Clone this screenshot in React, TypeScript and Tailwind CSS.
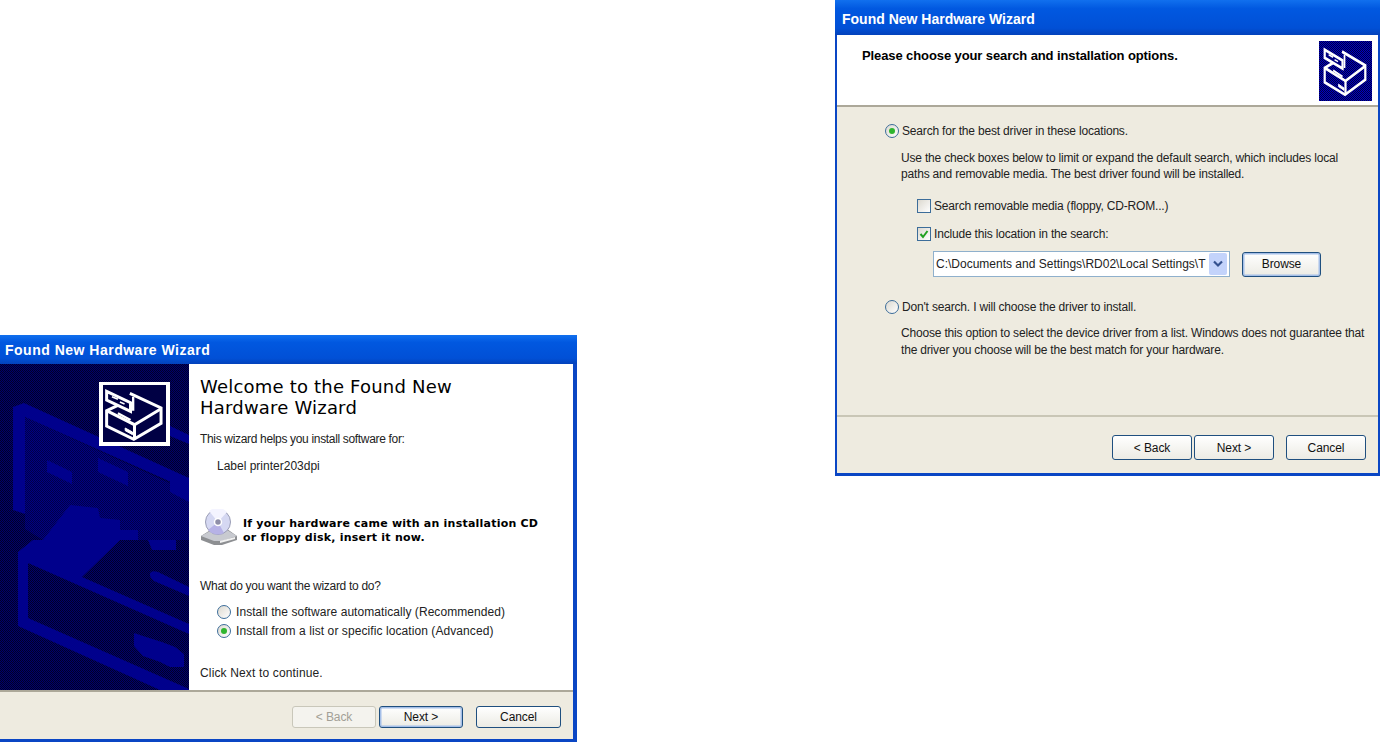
function HardwareIcon({ cardFill }: { cardFill: string }) {
  return (
    <g fill="none" stroke="#fff" strokeWidth="9" strokeLinejoin="miter">
      <path d="M120 52 L214 96 L214 142 L132 190 L50 150 L50 104 L84 88" />
      <path d="M50 104 L134 146 L214 98" />
      <path d="M134 146 L134 190" />
      <path d="M130 62 L130 104 M84 112 L122 132" strokeWidth="7" />
      <path d="M106 156 L128 168 L128 176 L106 164 Z" fill="#fff" strokeWidth="3" />
      <path d="M50 46 L122 80 L122 106 L50 72 Z" fill={cardFill} />
      <path d="M66 62 L84 70 M90 78 L104 84" strokeWidth="5" />
    </g>
  );
}

function DitherDefs({ id, light, dark }: { id: string; light: string; dark: string }) {
  return (
    <defs>
      <pattern id={id} width="2" height="2" patternUnits="userSpaceOnUse">
        <rect width="2" height="2" fill={light} />
        <rect width="1" height="1" fill={dark} />
        <rect x="1" y="1" width="1" height="1" fill={dark} />
      </pattern>
    </defs>
  );
}

function SidePanel() {
  const blue = "#00008c";
  return (
    <svg className="block w-[189px] h-[326px] shrink-0" viewBox="0 0 189 326">
      <DitherDefs id="panel" light="#00006c" dark="#000028" />
      <DitherDefs id="panelMid" light="#000084" dark="#000048" />
      <rect width="189" height="326" fill="url(#panel)" />
      <path d="M25 53 L189 128 L189 176 L43 176 L25 165 Z" fill="url(#panelMid)" />
      <g fill={blue}>
        <path d="M13 43 L24 39 L189 114 L189 126 L25 53 L25 150 L13 146 Z" />
        <path d="M170 62 L189 71 L189 80 L170 72 Z" />
        <path d="M170 106 L189 115 L189 138 L170 128 Z" />
        <path d="M47 96 L72 108 L72 120 L47 108 Z" />
        <path d="M98 94 L128 108 L128 122 L98 108 Z" />
        <path d="M18 188 L33 176 L43 176 L70 141 L88 143 L98 144 L100 154 L120 156 L120 166 L138 166 L138 176 L120 176 L82 213 L189 260 L189 270 L28 199 L28 254 L189 325 L189 326 L160 326 L18 262 Z" />
        <path d="M148 176 L176 176 L176 186 L152 186 Z" />
        <path d="M150 209 Q152 206 158 208 L189 223 L189 232 L154 217 Q149 213 150 209 Z" />
        <path d="M134 269 L143 272 L162 278 L175 283 L184 290 L184 303 L170 303 L160 298 L143 292 L134 282 Z" />
      </g>
      <rect x="99" y="18" width="71" height="64" fill="#fff" />
      <rect x="103" y="21" width="63" height="57" fill="#000044" />
      <svg x="99" y="18" width="71" height="64" viewBox="27 18 214 192" preserveAspectRatio="none">
        <HardwareIcon cardFill="#000044" />
      </svg>
    </svg>
  );
}

function CdIcon() {
  return (
    <svg className="w-[38px] h-[36px] shrink-0" viewBox="0 0 38 36">
      <path d="M1 27 L12 20 L27 20 L37 27 L37 31 L22 36 L14 36 L1 31 Z" fill="#8d8f92" />
      <path d="M1 27 L12 21 L27 21 L37 27 L22 32 L14 32 Z" fill="#c8cad0" />
      <path d="M20 32 L35 28 L35 30 L20 34 Z" fill="#f2f2f2" />
      <circle cx="18" cy="13" r="12.5" fill="#d5d8f2" stroke="#9a9db5" />
      <path d="M18 13 L9 2 A13 13 0 0 1 27 3 Z" fill="#f4f4ff" />
      <path d="M18 13 L8 21 A13 13 0 0 0 24 24 Z" fill="#b6b2e6" />
      <circle cx="18" cy="13" r="3.5" fill="#8f8fa8" stroke="#fff" strokeWidth="1.5" />
    </svg>
  );
}

function Radio({ on }: { on?: boolean }) {
  return (
    <span className="flex items-center justify-center w-[14px] h-[14px] shrink-0 rounded-full border border-[#3c6d9a] bg-linear-to-br from-[#dcd9d0] to-white">
      {on && <span className="block w-[6px] h-[6px] rounded-full bg-[#2fb52f]" />}
    </span>
  );
}

function Check({ on }: { on?: boolean }) {
  return (
    <span className="flex items-center justify-center w-[14px] h-[14px] shrink-0 border border-[#3c6d9a] bg-linear-to-br from-[#dcd9d0] to-white">
      {on && (
        <svg width="10" height="10" viewBox="0 0 10 10">
          <path d="M1.5 5 L4 8 L8.5 2" fill="none" stroke="#21a121" strokeWidth="2" />
        </svg>
      )}
    </span>
  );
}

function Btn({ label, w, strong, off }: { label: string; w: string; strong?: boolean; off?: boolean }) {
  return (
    <button
      className={`${w} h-full rounded-[3px] border text-[12px] tracking-[-0.1px] ${
        off
          ? "border-[#c9c7ba] bg-[#f4f3ee] text-[#a2a096]"
          : "border-[#1f4f7f] bg-linear-to-b from-white to-[#ecebe4] text-[#111]"
      } ${strong ? "shadow-[inset_0_0_0_1.5px_#a5bfe8]" : ""}`}
    >
      {label}
    </button>
  );
}

function TitleBar({ className, tracking }: { className: string; tracking: string }) {
  return (
    <div className={`${className} shrink-0 flex items-center bg-[linear-gradient(to_bottom,#1170ee_0%,#0158e0_25%,#0150d6_80%,#0342bb_100%)]`}>
      <span className={`${tracking} text-white font-bold text-[14px] font-['Liberation_Sans',sans-serif]`}>
        Found New Hardware Wizard
      </span>
    </div>
  );
}

export default function App() {
  return (
    <div className="w-[1380px] h-[742px] bg-white overflow-hidden flex justify-between items-start font-['Liberation_Sans',sans-serif] text-[12px] text-[#222]">
      {/* Welcome step */}
      <div className="w-[577px] h-[407px] mt-[335px] flex flex-col bg-[#0a46c4]">
        <TitleBar className="h-[29px] pl-[5px] pt-[2px]" tracking="tracking-[0.5px]" />
        <div className="flex flex-col flex-1 mr-[4px] mb-[3px]">
          <div className="h-[326px] flex bg-white">
            <SidePanel />
            <div className="pl-[11px] flex flex-col">
              <h1 className="mt-[12px] text-[18px] leading-[21px] tracking-[0.2px] text-black font-['DejaVu_Sans',sans-serif]">
                Welcome to the Found New
                <br />
                Hardware Wizard
              </h1>
              <p className="mt-[14px] leading-[14px] tracking-[-0.33px]">This wizard helps you install software for:</p>
              <p className="mt-[13px] ml-[17px] leading-[14px]">Label printer203dpi</p>
              <div className="mt-[36px] flex items-start gap-[5px]">
                <CdIcon />
                <p className="mt-[8px] font-['DejaVu_Sans',sans-serif] font-bold text-[11px] leading-[14px] tracking-[0.22px] text-black">
                  If your hardware came with an installation CD
                  <br />
                  or floppy disk, insert it now.
                </p>
              </div>
              <p className="mt-[34px] leading-[14px] tracking-[-0.3px]">What do you want the wizard to do?</p>
              <div className="mt-[12px] ml-[17px] flex items-center gap-[5px] h-[14px] tracking-[0.06px]">
                <Radio />
                <span>Install the software automatically (Recommended)</span>
              </div>
              <div className="mt-[5px] ml-[17px] flex items-center gap-[5px] h-[14px] tracking-[0.08px]">
                <Radio on />
                <span>Install from a list or specific location (Advanced)</span>
              </div>
              <p className="mt-[28px] leading-[14px] tracking-[0.15px]">Click Next to continue.</p>
            </div>
          </div>
          <div className="flex-1 border-t-2 border-[#aca899] bg-[#eeebe0] flex items-start pt-[14px] pr-[12px]">
            <div className="ml-auto h-[22px] flex">
              <Btn label="< Back" w="w-[84px]" off />
              <div className="w-[3px]" />
              <Btn label="Next >" w="w-[84px]" strong />
              <div className="w-[13px]" />
              <Btn label="Cancel" w="w-[85px]" />
            </div>
          </div>
        </div>
      </div>

      {/* Search options step */}
      <div className="w-[545px] h-[476px] flex flex-col bg-[#0a46c4]">
        <TitleBar className="h-[35px] pl-[7px] pt-[4px]" tracking="tracking-[0px]" />
        <div className="flex flex-col flex-1 mx-[2px] mb-[3px]">
          <div className="h-[72px] bg-white border-b-2 border-[#aca899] flex justify-between">
            <p className="ml-[25px] mt-[13px] font-bold text-[13px] leading-[16px] tracking-[-0.1px] text-black">
              Please choose your search and installation options.
            </p>
            <svg className="block mt-[6px] mr-[6px]" width="53" height="60" viewBox="0 0 53 60">
              <DitherDefs id="tile" light="#0000c0" dark="#000040" />
              <rect width="53" height="60" fill="url(#tile)" />
              <svg x="0" y="0" width="53" height="60" viewBox="27 18 214 192" preserveAspectRatio="none">
                <HardwareIcon cardFill="#000080" />
              </svg>
            </svg>
          </div>
          <div className="flex-1 bg-[#eeebe0] flex flex-col tracking-[-0.18px]">
            <div className="h-[310px] border-b-2 border-[#c9c6b6] pl-[48px] pr-[4px]">
              <div className="mt-[17px] flex items-center gap-[3px] h-[14px]">
                <Radio on />
                <span>Search for the best driver in these locations.</span>
              </div>
              <p className="mt-[12px] ml-[16px] leading-[16px] whitespace-nowrap">
                Use the check boxes below to limit or expand the default search, which includes local
                <br />
                paths and removable media. The best driver found will be installed.
              </p>
              <div className="mt-[17px] ml-[32px] flex items-center gap-[3px] h-[14px]">
                <Check />
                <span>Search removable media (floppy, CD-ROM...)</span>
              </div>
              <div className="mt-[14px] ml-[32px] flex items-center gap-[3px] h-[14px]">
                <Check on />
                <span>Include this location in the search:</span>
              </div>
              <div className="mt-[10px] ml-[48px] flex h-[26px] items-center">
                <div className="w-[297px] h-full border border-[#8fb0cc] bg-white flex items-center pl-[2px] pr-[2px] tracking-[0px]">
                  <span className="flex-1 overflow-hidden whitespace-nowrap">
                    C:\Documents and Settings\RD02\Local Settings\T
                  </span>
                  <span className="w-[18px] h-[22px] flex items-center justify-center rounded-[2px] bg-[#c3d3fb]">
                    <svg width="10" height="8" viewBox="0 0 10 8">
                      <path d="M1 1.5 L5 5.5 L9 1.5" fill="none" stroke="#34518f" strokeWidth="2.2" />
                    </svg>
                  </span>
                </div>
                <div className="ml-[12px] h-[25px]">
                  <Btn label="Browse" w="w-[79px]" strong />
                </div>
              </div>
              <div className="mt-[23px] flex items-center gap-[3px] h-[14px]">
                <Radio />
                <span>Don't search. I will choose the driver to install.</span>
              </div>
              <p className="mt-[11px] ml-[16px] leading-[17px] whitespace-nowrap">
                Choose this option to select the device driver from a list. Windows does not guarantee that
                <br />
                the driver you choose will be the best match for your hardware.
              </p>
            </div>
            <div className="flex-1 flex items-start pt-[18px] pr-[12px]">
              <div className="ml-auto h-[25px] flex">
                <Btn label="< Back" w="w-[80px]" />
                <div className="w-[2px]" />
                <Btn label="Next >" w="w-[80px]" />
                <div className="w-[12px]" />
                <Btn label="Cancel" w="w-[80px]" />
              </div>
            </div>
          </div>
        </div>
      </div>
    </div>
  );
}
